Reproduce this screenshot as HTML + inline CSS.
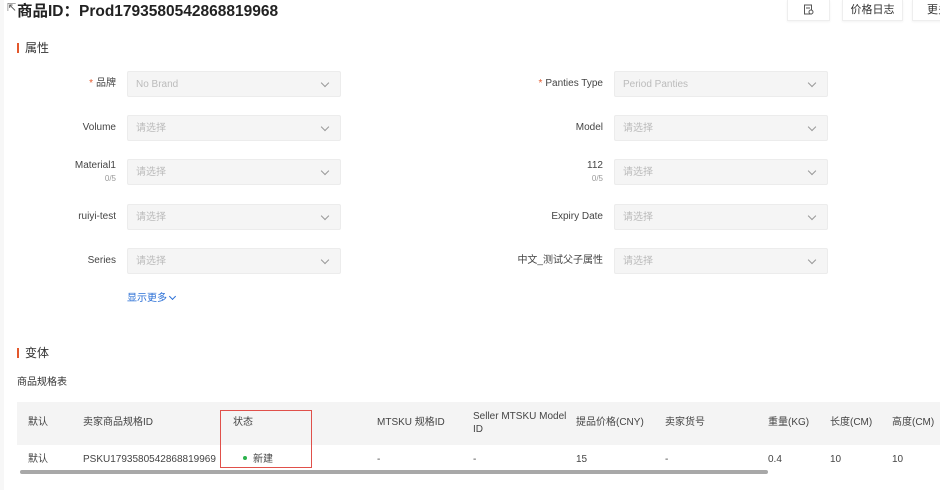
<!DOCTYPE html>
<html><head><meta charset="utf-8"><style>
*{margin:0;padding:0;box-sizing:border-box;line-height:1.2}
body{width:940px;height:490px;background:#fff;font-family:"Liberation Sans","Noto Sans CJK SC",sans-serif;position:relative;overflow:hidden;color:#333}
.a{position:absolute}
.title{left:17px;top:3px;font-size:15.5px;font-weight:bold;color:#222}
.btn{top:0;height:21px;border:1px solid #eee;border-top:none;background:#fff;font-size:11px;color:#333;text-align:center;line-height:20px;box-shadow:0 1px 2px rgba(0,0,0,.05)}
.sec{font-size:12px;color:#333}
.sec i{display:inline-block;width:2px;height:10px;background:#e3582c;margin-right:6px;vertical-align:-1px}
.lbl{font-size:10px;color:#444;text-align:right;width:120px;line-height:12px}
.lbl small{display:block;font-size:8px;color:#999;margin-top:2px;line-height:10px}
.sel{width:214px;height:26px;background:#f5f5f5;border:1px solid #ececec;border-radius:2px;font-size:10px;color:#bbb;line-height:12px;padding:7px 0 0 8px}
.sel:after{content:"";position:absolute;right:12px;top:8px;width:5px;height:5px;border-right:1px solid #999;border-bottom:1px solid #999;transform:rotate(45deg)}
.req{color:#e3582c;margin-right:3px}
.th,.td{font-size:10px;color:#444;line-height:12px}
</style></head><body>
<div class="a" style="left:0;top:0;width:4px;height:490px;background:#f7f7f7"></div>
<div class="a" style="left:7px;top:2px;font-size:11px;color:#555">&#8689;</div>
<div class="a title">商品ID：Prod1793580542868819968</div>
<div class="a btn" style="left:787px;width:43px"><svg width="11" height="11" viewBox="0 0 11 11" style="vertical-align:-2px"><rect x="1.5" y="1" width="7" height="9" fill="none" stroke="#555"/><line x1="3" y1="4" x2="7" y2="4" stroke="#555"/><circle cx="8" cy="8" r="2" fill="#fff" stroke="#555"/></svg></div>
<div class="a btn" style="left:842px;width:61px">价格日志</div>
<div class="a btn" style="left:912px;width:40px;text-align:left;padding-left:14px">更多</div>
<div class="a sec" style="left:17px;top:41px"><i></i>属性</div>

<div class="a lbl" style="left:-4px;top:78px"><span class="req">*</span>品牌</div>
<div class="a sel" style="left:127px;top:71px">No Brand</div>
<div class="a lbl" style="left:-4px;top:122px">Volume</div>
<div class="a sel" style="left:127px;top:115px">请选择</div>
<div class="a lbl" style="left:-4px;top:160px">Material1<small>0/5</small></div>
<div class="a sel" style="left:127px;top:159px">请选择</div>
<div class="a lbl" style="left:-4px;top:211px">ruiyi-test</div>
<div class="a sel" style="left:127px;top:204px">请选择</div>
<div class="a lbl" style="left:-4px;top:255px">Series</div>
<div class="a sel" style="left:127px;top:248px">请选择</div>
<div class="a" style="left:127px;top:293px;font-size:10px;color:#2a6fd6">显示更多 <span style="display:inline-block;width:5px;height:5px;border-right:1px solid #2a6fd6;border-bottom:1px solid #2a6fd6;transform:rotate(45deg);vertical-align:2px"></span></div>

<div class="a lbl" style="left:483px;top:78px"><span class="req">*</span>Panties Type</div>
<div class="a sel" style="left:614px;top:71px">Period Panties</div>
<div class="a lbl" style="left:483px;top:122px">Model</div>
<div class="a sel" style="left:614px;top:115px">请选择</div>
<div class="a lbl" style="left:483px;top:160px">112<small>0/5</small></div>
<div class="a sel" style="left:614px;top:159px">请选择</div>
<div class="a lbl" style="left:483px;top:211px">Expiry Date</div>
<div class="a sel" style="left:614px;top:204px">请选择</div>
<div class="a lbl" style="left:483px;top:255px">中文_测试父子属性</div>
<div class="a sel" style="left:614px;top:248px">请选择</div>

<div class="a sec" style="left:17px;top:346px"><i></i>变体</div>
<div class="a" style="left:17px;top:377px;font-size:10px;color:#333">商品规格表</div>
<div class="a" style="left:17px;top:402px;width:923px;height:43px;background:#f4f4f4"></div>
<div class="a th" style="left:28px;top:417px">默认</div>
<div class="a th" style="left:83px;top:417px">卖家商品规格ID</div>
<div class="a th" style="left:233px;top:417px">状态</div>
<div class="a th" style="left:377px;top:417px">MTSKU 规格ID</div>
<div class="a th" style="left:473px;top:410px;line-height:13px">Seller MTSKU Model<br>ID</div>
<div class="a th" style="left:576px;top:417px">提品价格(CNY)</div>
<div class="a th" style="left:665px;top:417px">卖家货号</div>
<div class="a th" style="left:768px;top:417px">重量(KG)</div>
<div class="a th" style="left:830px;top:417px">长度(CM)</div>
<div class="a th" style="left:892px;top:417px">高度(CM)</div>
<div class="a td" style="left:28px;top:454px">默认</div>
<div class="a td" style="left:83px;top:454px">PSKU1793580542868819969</div>
<div class="a td" style="left:243px;top:454px"><span style="display:inline-block;width:4px;height:4px;border-radius:50%;background:#2bb24c;margin-right:6px;vertical-align:2px"></span>新建</div>
<div class="a td" style="left:377px;top:454px">-</div>
<div class="a td" style="left:473px;top:454px">-</div>
<div class="a td" style="left:576px;top:454px">15</div>
<div class="a td" style="left:665px;top:454px">-</div>
<div class="a td" style="left:768px;top:454px">0.4</div>
<div class="a td" style="left:830px;top:454px">10</div>
<div class="a td" style="left:892px;top:454px">10</div>
<div class="a" style="left:220px;top:410px;width:92px;height:58px;border:1.5px solid #e0504a"></div>
<div class="a" style="left:20px;top:470px;width:748px;height:4px;border-radius:2px;background:#a8a8a8"></div>
</body></html>
